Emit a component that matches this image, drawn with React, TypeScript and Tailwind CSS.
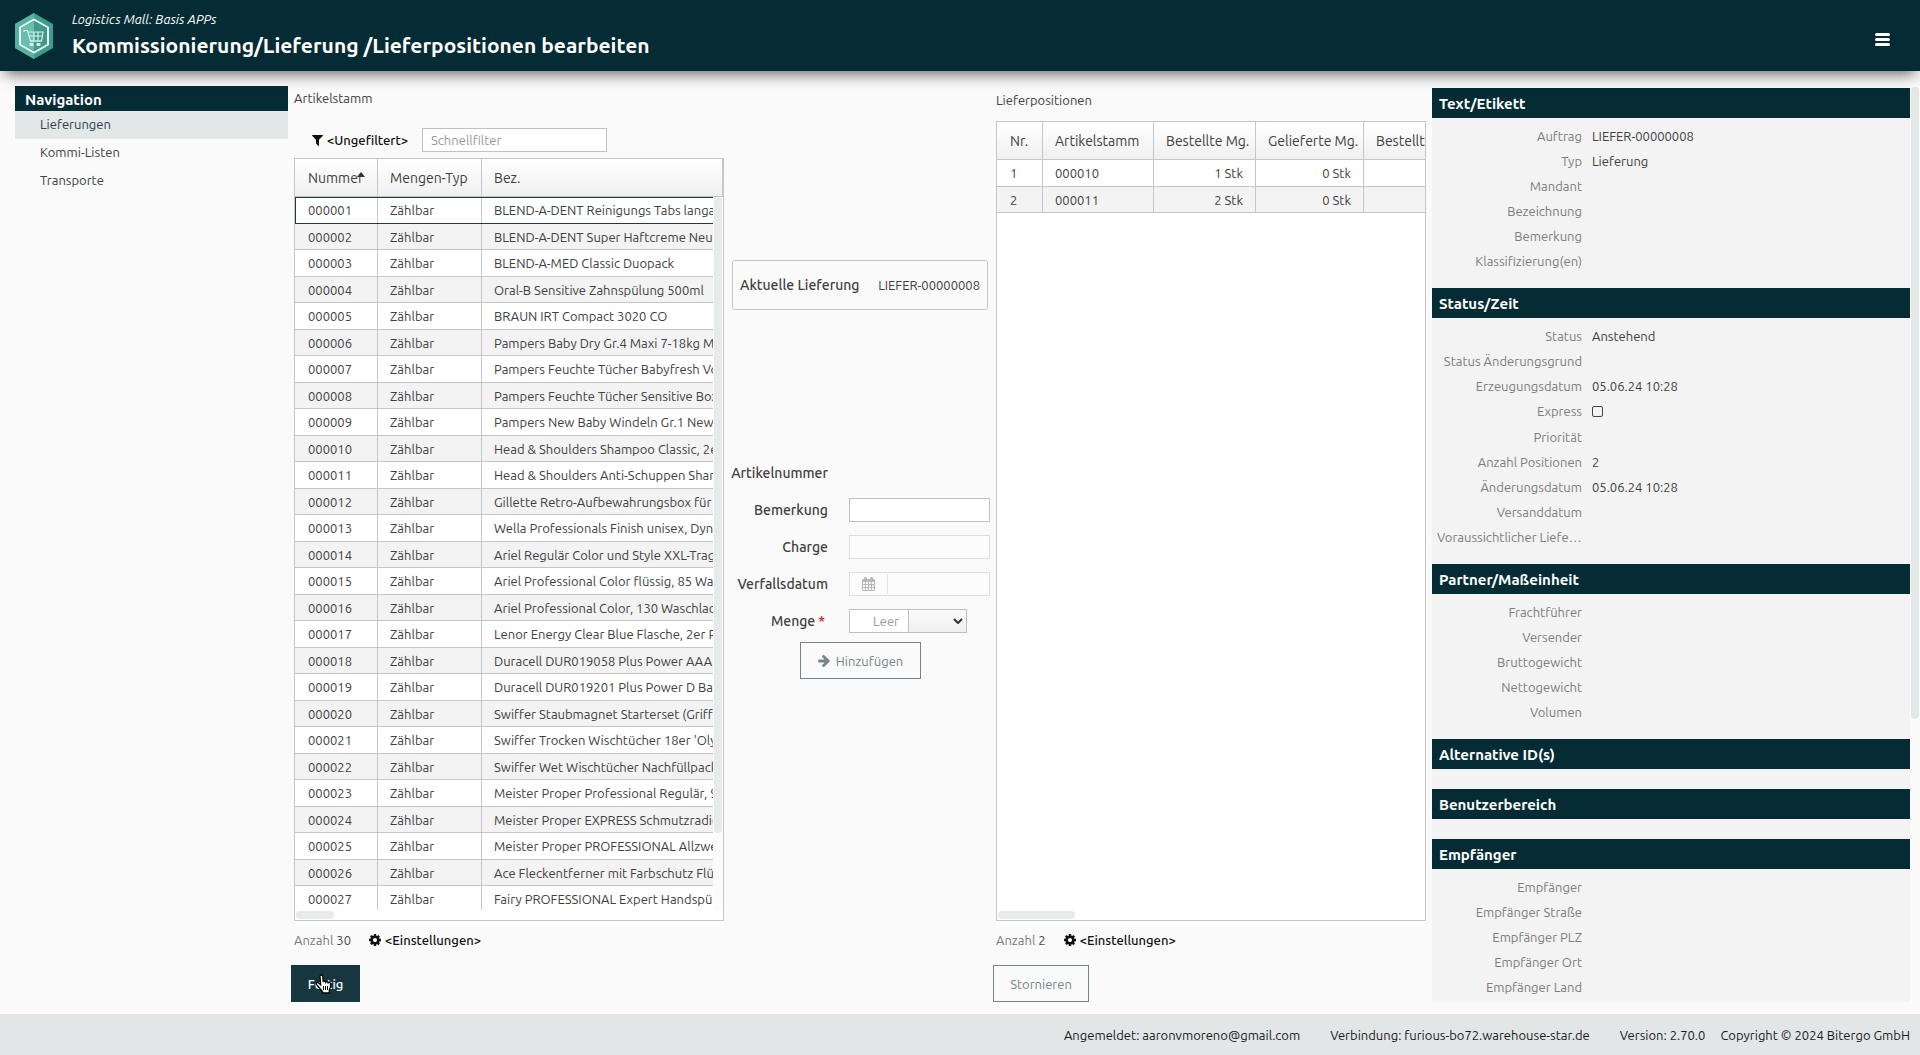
import type { ReactNode } from "react";

const articles: [string, string][] = [
  ["000001", "BLEND-A-DENT Reinigungs Tabs langanh."],
  ["000002", "BLEND-A-DENT Super Haftcreme Neutral"],
  ["000003", "BLEND-A-MED Classic Duopack"],
  ["000004", "Oral-B Sensitive Zahnspülung 500ml"],
  ["000005", "BRAUN IRT Compact 3020 CO"],
  ["000006", "Pampers Baby Dry Gr.4 Maxi 7-18kg MB"],
  ["000007", "Pampers Feuchte Tücher Babyfresh Vort."],
  ["000008", "Pampers Feuchte Tücher Sensitive Box"],
  ["000009", "Pampers New Baby Windeln Gr.1 Newb."],
  ["000010", "Head & Shoulders Shampoo Classic, 2er"],
  ["000011", "Head & Shoulders Anti-Schuppen Sham."],
  ["000012", "Gillette Retro-Aufbewahrungsbox für R."],
  ["000013", "Wella Professionals Finish unisex, Dyna."],
  ["000014", "Ariel Regulär Color und Style XXL-Trag."],
  ["000015", "Ariel Professional Color flüssig, 85 Was."],
  ["000016", "Ariel Professional Color, 130 Waschlad."],
  ["000017", "Lenor Energy Clear Blue Flasche, 2er Pack"],
  ["000018", "Duracell DUR019058 Plus Power AAA B."],
  ["000019", "Duracell DUR019201 Plus Power D Batt."],
  ["000020", "Swiffer Staubmagnet Starterset (Griff +"],
  ["000021", "Swiffer Trocken Wischtücher 18er 'Olym'"],
  ["000022", "Swiffer Wet Wischtücher Nachfüllpack."],
  ["000023", "Meister Proper Professional Regulär, 90"],
  ["000024", "Meister Proper EXPRESS Schmutzradier."],
  ["000025", "Meister Proper PROFESSIONAL Allzweck"],
  ["000026", "Ace Fleckentferner mit Farbschutz Flüss."],
  ["000027", "Fairy PROFESSIONAL Expert Handspülm."],
];

const positions = [
  { nr: "1", article: "000010", ordered: "1 Stk", delivered: "0 Stk" },
  { nr: "2", article: "000011", ordered: "2 Stk", delivered: "0 Stk" },
];

type Field = { label: string; value?: string; check?: boolean };

const sections: { title: string; fields: Field[] }[] = [
  {
    title: "Text/Etikett",
    fields: [
      { label: "Auftrag", value: "LIEFER-00000008" },
      { label: "Typ", value: "Lieferung" },
      { label: "Mandant" },
      { label: "Bezeichnung" },
      { label: "Bemerkung" },
      { label: "Klassifizierung(en)" },
    ],
  },
  {
    title: "Status/Zeit",
    fields: [
      { label: "Status", value: "Anstehend" },
      { label: "Status Änderungsgrund" },
      { label: "Erzeugungsdatum", value: "05.06.24 10:28" },
      { label: "Express", check: true },
      { label: "Priorität" },
      { label: "Anzahl Positionen", value: "2" },
      { label: "Änderungsdatum", value: "05.06.24 10:28" },
      { label: "Versanddatum" },
      { label: "Voraussichtlicher Liefertermin" },
    ],
  },
  {
    title: "Partner/Maßeinheit",
    fields: [
      { label: "Frachtführer" },
      { label: "Versender" },
      { label: "Bruttogewicht" },
      { label: "Nettogewicht" },
      { label: "Volumen" },
    ],
  },
  { title: "Alternative ID(s)", fields: [] },
  { title: "Benutzerbereich", fields: [] },
  {
    title: "Empfänger",
    fields: [
      { label: "Empfänger" },
      { label: "Empfänger Straße" },
      { label: "Empfänger PLZ" },
      { label: "Empfänger Ort" },
      { label: "Empfänger Land" },
    ],
  },
];

function Logo() {
  return (
    <svg viewBox="0 0 40 46" className="h-[46px] w-10" aria-hidden="true">
      <path d="M20 0 39 11v24L20 46 1 35V11Z" fill="#3f9c8c" />
      <path d="M20 0v46L1 35V11Z" fill="#56b3a2" />
      <path d="M20 6.500 34 14.500v17L20 39.500 6 31.500v-17Z" fill="#3c9485" stroke="#e6fff9" strokeWidth="2" />
      <path d="M20 8v30L7 31V15Z" fill="#6bbcae" />
      <path d="M20 8 33 15v16l-13 7Z" fill="#43998a" />
      <path
        d="M10 17.500h3.500l3 10.500h11l1.500-9H15m1 4h12m-8-4v8m4-8v8"
        fill="none"
        stroke="#d4f5ee"
        strokeWidth="1.200"
      />
      <path d="M10 17v2M16 28h12" stroke="#d4f5ee" strokeWidth="1.200" />
      <rect x="15.500" y="30" width="4" height="3" rx="1" fill="#d4f5ee" />
      <rect x="22.500" y="30" width="4" height="3" rx="1" fill="#d4f5ee" />
    </svg>
  );
}

function FilterIcon() {
  return (
    <svg viewBox="0 0 1408 1408" className="h-[11px] w-[11px]" fill="currentColor" aria-hidden="true">
      <path d="M1403 39q17 41-14 70l-493 493v742q0 42-39 59-13 5-25 5-27 0-45-19l-256-256q-19-19-19-45v-486l-493-493q-31-29-14-70 17-39 59-39h1280q42 0 59 39z" />
    </svg>
  );
}

function CogIcon() {
  return (
    <svg viewBox="0 0 1536 1536" className="h-[12px] w-[12px]" fill="currentColor" aria-hidden="true">
      <path d="M1024 768q0-106-75-181t-181-75-181 75-75 181 75 181 181 75 181-75 75-181zm512-109v222q0 12-8 23t-20 13l-185 28q-19 54-39 91 35 50 107 138 10 12 10 25t-9 23q-27 37-99 108t-94 71q-12 0-26-9l-138-108q-44 23-91 38-16 136-29 186-7 28-36 28h-222q-14 0-24.500-8.500t-11.500-21.500l-28-184q-49-16-90-37l-141 107q-10 9-25 9-14 0-25-11-126-114-165-168-7-10-7-23 0-12 8-23 15-21 51-66.500t54-70.500q-27-50-41-99l-183-27q-13-2-21-12.500t-8-23.500v-222q0-12 8-23t19-13l186-28q14-46 39-92-40-57-107-138-10-12-10-24 0-10 9-23 26-36 98.500-107.500t94.500-71.500q13 0 26 10l138 107q44-23 91-38 16-136 29-186 7-28 36-28h222q14 0 24.500 8.500t11.500 21.500l28 184q49 16 90 37l142-107q9-9 24-9 13 0 25 10 129 119 165 170 7 8 7 22 0 12-8 23-15 21-51 66.500t-54 70.500q26 50 41 98l183 28q13 2 21 12.500t8 23.500z" />
    </svg>
  );
}

function ArrowIcon() {
  return (
    <svg viewBox="0 0 1472 1536" className="h-[12px] w-[12px]" fill="currentColor" aria-hidden="true">
      <path d="M1472 768q0 54-37 91l-651 651q-39 37-91 37-51 0-90-37l-75-75q-38-38-38-91t38-91l293-293h-704q-52 0-84.500-37.500t-32.500-90.500v-128q0-53 32.500-90.500t84.500-37.500h704l-293-294q-38-36-38-90t38-90l75-75q38-38 90-38 53 0 91 38l651 651q37 35 37 90z" />
    </svg>
  );
}

function CalendarIcon() {
  return (
    <svg viewBox="0 0 13 14" className="h-[14px] w-[13px]" aria-hidden="true">
      <path d="M1 2h11a1 1 0 0 1 1 1v10a1 1 0 0 1-1 1H1a1 1 0 0 1-1-1V3a1 1 0 0 1 1-1Z" fill="#b9b9b9" />
      <path d="M1 5h2v2H1zM4 5h2v2H4zM7 5h2v2H7zM10 5h2v2h-2zM1 8h2v2H1zM4 8h2v2H4zM7 8h2v2H7zM10 8h2v2h-2zM1 11h2v2H1zM4 11h2v2H4zM7 11h2v2H7zM10 11h2v2h-2z" fill="#fafafa" />
      <rect x="2" y="0" width="3" height="4" rx="1" fill="#b9b9b9" />
      <rect x="8" y="0" width="3" height="4" rx="1" fill="#b9b9b9" />
    </svg>
  );
}

function HandCursor() {
  return (
    <svg viewBox="0 0 18 20" className="pointer-events-none absolute left-6 top-[9px] h-[20px] w-[18px]" aria-hidden="true">
      <path
        d="M5 2.500c0-2 2.600-2 2.800 0L8.200 8c.4-1.200 2.300-1.100 2.500.2.500-1 2.200-.9 2.400.5.700-.8 2.300-.4 2.400.9.300 2.500-.2 4.500-1.200 6.400V19H7.500v-1.500C5.500 15.500 4 13 1.500 10.500c-1-1.400.9-2.600 2.200-1.500l2 1.800Z"
        fill="#fff"
        stroke="#000"
        strokeWidth="1.300"
      />
      <path d="M8.500 12v4M10.500 12v4M12.500 12v4" stroke="#000" strokeWidth="1" />
    </svg>
  );
}

function Th({ children }: { children?: ReactNode }) {
  return (
    <th className="relative h-[38px] overflow-hidden whitespace-nowrap border-b border-r border-[#c6c6c6] bg-linear-to-b from-white to-[#f0f0f0] pl-3 text-left text-sm font-normal first:pl-[13px]">
      {children}
    </th>
  );
}

function TableFooter({ count }: { count: string }) {
  return (
    <div className="mt-[9px] flex h-5 items-center">
      <span className="text-[#7a7a7a]">
        Anzahl <span className="text-[#474747]">{count}</span>
      </span>
      <button type="button" className="ml-[18px] flex items-center gap-1 font-medium text-[#111]">
        <CogIcon />
        &lt;Einstellungen&gt;
      </button>
    </div>
  );
}

function FormRow({ label, id, required, children }: { label: string; id: string; required?: boolean; children?: ReactNode }) {
  return (
    <div className="grid h-[37px] grid-cols-[98px_1fr] items-center gap-[21px]">
      <label htmlFor={id} className="whitespace-nowrap text-right text-sm font-medium">
        {label}
        {required && <span className="px-[3px] text-[#b3261e]">*</span>}
      </label>
      {children}
    </div>
  );
}

const cell = "overflow-hidden whitespace-nowrap border-b border-r border-[#c6c6c6] pl-3 leading-5 first:pl-[13px]";

export default function App() {
  return (
    <div className="flex h-screen flex-col overflow-hidden bg-[#fafafa] font-['Ubuntu','Noto_Sans',sans-serif] text-[13px] leading-5 text-[#404040]">
      <header className="relative z-10 flex h-[71px] shrink-0 items-center justify-between bg-[#052c34] pl-[14px] pr-[30px] text-white shadow-[0_8px_14px_-5px_rgba(0,0,0,0.6)]">
        <div className="flex items-center gap-[18px]">
          <Logo />
          <div className="pb-[2px]">
            <p className="text-[13px] italic leading-5">Logistics Mall: Basis APPs</p>
            <h1 className="text-[21px] font-bold leading-8">Kommissionierung/Lieferung /Lieferpositionen bearbeiten</h1>
          </div>
        </div>
        <button type="button" aria-label="Menü" className="flex w-[15px] flex-col gap-[2px] pt-2">
          <span className="h-[3px] rounded-full bg-white" />
          <span className="h-[3px] rounded-full bg-white" />
          <span className="h-[3px] rounded-full bg-white" />
        </button>
      </header>

      <main className="relative grid min-h-0 flex-1 grid-cols-[273fr_430fr_260fr_430fr_478fr] gap-[6px] pb-3 pl-[15px] pr-[10px]">
        <nav className="min-w-0 pt-[15px]">
          <h2 className="h-[25px] bg-[#052c34] pl-[10px] text-[15px] font-bold leading-[27px] text-white">Navigation</h2>
          <ul className="flex flex-col">
            <li>
              <a href="#lieferungen" className="block h-7 bg-[#e2e7e8] pl-[25px] leading-[27px] text-[#27424a]">Lieferungen</a>
            </li>
            <li>
              <a href="#kommi-listen" className="block h-7 pl-[25px] leading-[27px]">Kommi-Listen</a>
            </li>
            <li>
              <a href="#transporte" className="block h-7 pl-[25px] leading-[27px]">Transporte</a>
            </li>
          </ul>
        </nav>

        <section className="flex min-h-0 min-w-0 flex-col pt-[17px]">
          <h2>Artikelstamm</h2>
          <div className="mb-[6px] mt-5 flex items-center pl-[18px]">
            <button type="button" className="flex w-[110px] items-center gap-1 font-medium text-[#111]">
              <FilterIcon />
              &lt;Ungefiltert&gt;
            </button>
            <input
              type="text"
              aria-label="Schnellfilter"
              placeholder="Schnellfilter"
              className="h-6 w-[185px] border border-[#c0c0c0] bg-white px-2 placeholder:text-[#999]"
            />
          </div>
          <div className="relative min-h-0 flex-1 overflow-hidden border border-[#c6c6c6] bg-white">
            <table className="w-full table-fixed border-separate border-spacing-0">
              <colgroup>
                <col className="w-[83px]" />
                <col className="w-[104px]" />
                <col />
              </colgroup>
              <thead>
                <tr>
                  <Th>
                    Nummer
                    <svg viewBox="0 0 8 5" className="absolute right-[12px] top-[13px] h-[5px] w-2" aria-hidden="true">
                      <path d="M0 5 4 0l4 5Z" fill="#333" />
                    </svg>
                  </Th>
                  <Th>Mengen-Typ</Th>
                  <Th>Bez.</Th>
                </tr>
              </thead>
              <tbody>
                {articles.map(([nr, name], i) => (
                  <tr
                    key={nr}
                    className={
                      i === 0
                        ? "h-[27px] outline outline-1 -outline-offset-1 outline-[#1d3a42]"
                        : "odd:h-[27px] even:h-[26px] even:bg-[#f3f3f3]"
                    }
                  >
                    <td className={cell}>{nr}</td>
                    <td className={cell}>Zählbar</td>
                    <td className={cell}>{name}</td>
                  </tr>
                ))}
              </tbody>
            </table>
            <div className="absolute bottom-0 right-0 top-[38px] w-[10px] bg-[#fcfcfc] px-px">
              <div className="h-[88%] rounded-sm bg-[#e6eaeb]" />
            </div>
            <div className="absolute inset-x-0 bottom-0 h-[10px] bg-white px-px pt-px">
              <div className="h-2 w-[38px] rounded-sm bg-[#e6eaeb]" />
            </div>
          </div>
          <TableFooter count="30" />
          <button type="button" className="relative -ml-[3px] mt-[15px] h-[37px] w-[69px] bg-[#17363f] font-medium text-white">
            Fertig
            <HandCursor />
          </button>
        </section>

        <section className="flex min-w-0 flex-col pt-[189px]">
          <div className="mx-[2px] flex h-[50px] items-center justify-between rounded-[3px] border border-[#c6c6c6] px-[7px]">
            <span className="text-sm font-medium">Aktuelle Lieferung</span>
            <span>LIEFER-00000008</span>
          </div>
          <form className="mt-[144px] flex flex-col">
            <FormRow label="Artikelnummer" id="nummer">
              <output id="nummer" />
            </FormRow>
            <FormRow label="Bemerkung" id="bemerkung">
              <input id="bemerkung" type="text" className="h-6 w-full border border-[#c0c0c0] bg-white px-2" />
            </FormRow>
            <FormRow label="Charge" id="charge">
              <input id="charge" type="text" disabled className="h-6 w-full border border-[#dedede] bg-[#fcfcfc] px-2" />
            </FormRow>
            <FormRow label="Verfallsdatum" id="datum">
              <div className="flex h-6 border border-[#dedede] bg-[#fcfcfc]">
                <button type="button" disabled aria-label="Kalender" className="my-px flex w-[38px] shrink-0 items-center justify-center border-r border-[#e4e4e4]">
                  <CalendarIcon />
                </button>
                <input id="datum" type="text" disabled className="w-full min-w-0 bg-transparent px-2" />
              </div>
            </FormRow>
            <FormRow label="Menge" id="menge" required>
              <div className="flex h-6">
                <input
                  id="menge"
                  type="text"
                  placeholder="Leer"
                  className="w-[60px] border border-[#c0c0c0] bg-white px-[9px] text-right placeholder:text-[#999]"
                />
                <div className="relative w-[58px]">
                  <select
                    aria-label="Einheit"
                    className="h-full w-full appearance-none border border-l-0 border-[#c0c0c0] bg-linear-to-b from-[#fbfbfb] to-[#f0f0f0]"
                  />
                  <svg viewBox="0 0 10 6" className="pointer-events-none absolute right-1 top-[9px] h-[6px] w-[10px]" aria-hidden="true">
                    <path d="m1 1 4 4 4-4" fill="none" stroke="#333" strokeWidth="2" />
                  </svg>
                </div>
              </div>
            </FormRow>
            <button
              type="button"
              className="ml-[70px] mt-[3px] flex h-[37px] w-[121px] items-center justify-center gap-[6px] border border-[#748489] text-[#748489]"
            >
              <ArrowIcon />
              Hinzufügen
            </button>
          </form>
        </section>

        <section className="flex min-h-0 min-w-0 flex-col pt-[19px]">
          <h2 className="mb-[11px]">Lieferpositionen</h2>
          <div className="relative min-h-0 flex-1 overflow-hidden border border-[#c6c6c6] bg-white">
            <table className="w-[520px] table-fixed border-separate border-spacing-0">
              <colgroup>
                <col className="w-[46px]" />
                <col className="w-[111px]" />
                <col className="w-[102px]" />
                <col className="w-[108px]" />
                <col />
              </colgroup>
              <thead>
                <tr>
                  <Th>Nr.</Th>
                  <Th>Artikelstamm</Th>
                  <Th>Bestellte Mg.</Th>
                  <Th>Gelieferte Mg.</Th>
                  <Th>Bestellte VPE</Th>
                </tr>
              </thead>
              <tbody>
                {positions.map((p) => (
                  <tr key={p.nr} className="odd:h-[27px] even:h-[26px] even:bg-[#f3f3f3]">
                    <td className={cell}>{p.nr}</td>
                    <td className={cell}>{p.article}</td>
                    <td className={cell + " pr-3 text-right"}>{p.ordered}</td>
                    <td className={cell + " pr-3 text-right"}>{p.delivered}</td>
                    <td className={cell} />
                  </tr>
                ))}
              </tbody>
            </table>
            <div className="absolute inset-x-0 bottom-0 h-[10px] bg-white px-px pt-px">
              <div className="h-2 w-[77px] rounded-sm bg-[#e6eaeb]" />
            </div>
          </div>
          <TableFooter count="2" />
          <button type="button" className="-ml-[3px] mt-[15px] h-[37px] w-[96px] border border-[#748489] text-[#748489]">
            Stornieren
          </button>
        </section>

        <aside className="mt-[17px] min-h-0 min-w-0 overflow-hidden bg-[#f3f3f3]">
          {sections.map((s) => (
            <section key={s.title}>
              <h2 className="h-[30px] bg-[#052c34] pl-[7px] text-[15px] font-bold leading-8 text-white">{s.title}</h2>
              <dl className="pb-[15px] pt-[5px]">
                {s.fields.map((f) => (
                  <div
                    key={f.label}
                    className={
                      (f.check ? "h-[26px]" : "h-[25px]") + " grid grid-cols-[145px_1fr] items-center gap-[10px] pl-[5px]"
                    }
                  >
                    <dt className="truncate text-right text-[#7d7d7d]">{f.label}</dt>
                    <dd>
                      {f.check ? (
                        <input
                          type="checkbox"
                          aria-label={f.label}
                          className="block h-[11px] w-[11px] appearance-none rounded-[2px] border border-[#444]"
                        />
                      ) : (
                        f.value
                      )}
                    </dd>
                  </div>
                ))}
              </dl>
            </section>
          ))}
        </aside>
        <div className="absolute right-px top-4 h-[67%] w-2 rounded-sm bg-[#e3e7e8]" />
      </main>

      <footer className="flex h-[41px] shrink-0 items-center justify-end bg-[#e2e6e7] pr-[10px] text-[13px] text-[#1a1a1a]">
        <span className="mr-[30px]">Angemeldet: aaronvmoreno@gmail.com</span>
        <span className="mr-[30px]">Verbindung: furious-bo72.warehouse-star.de</span>
        <span className="mr-[15px]">Version: 2.70.0</span>
        <span>Copyright © 2024 Bitergo GmbH</span>
      </footer>
    </div>
  );
}
